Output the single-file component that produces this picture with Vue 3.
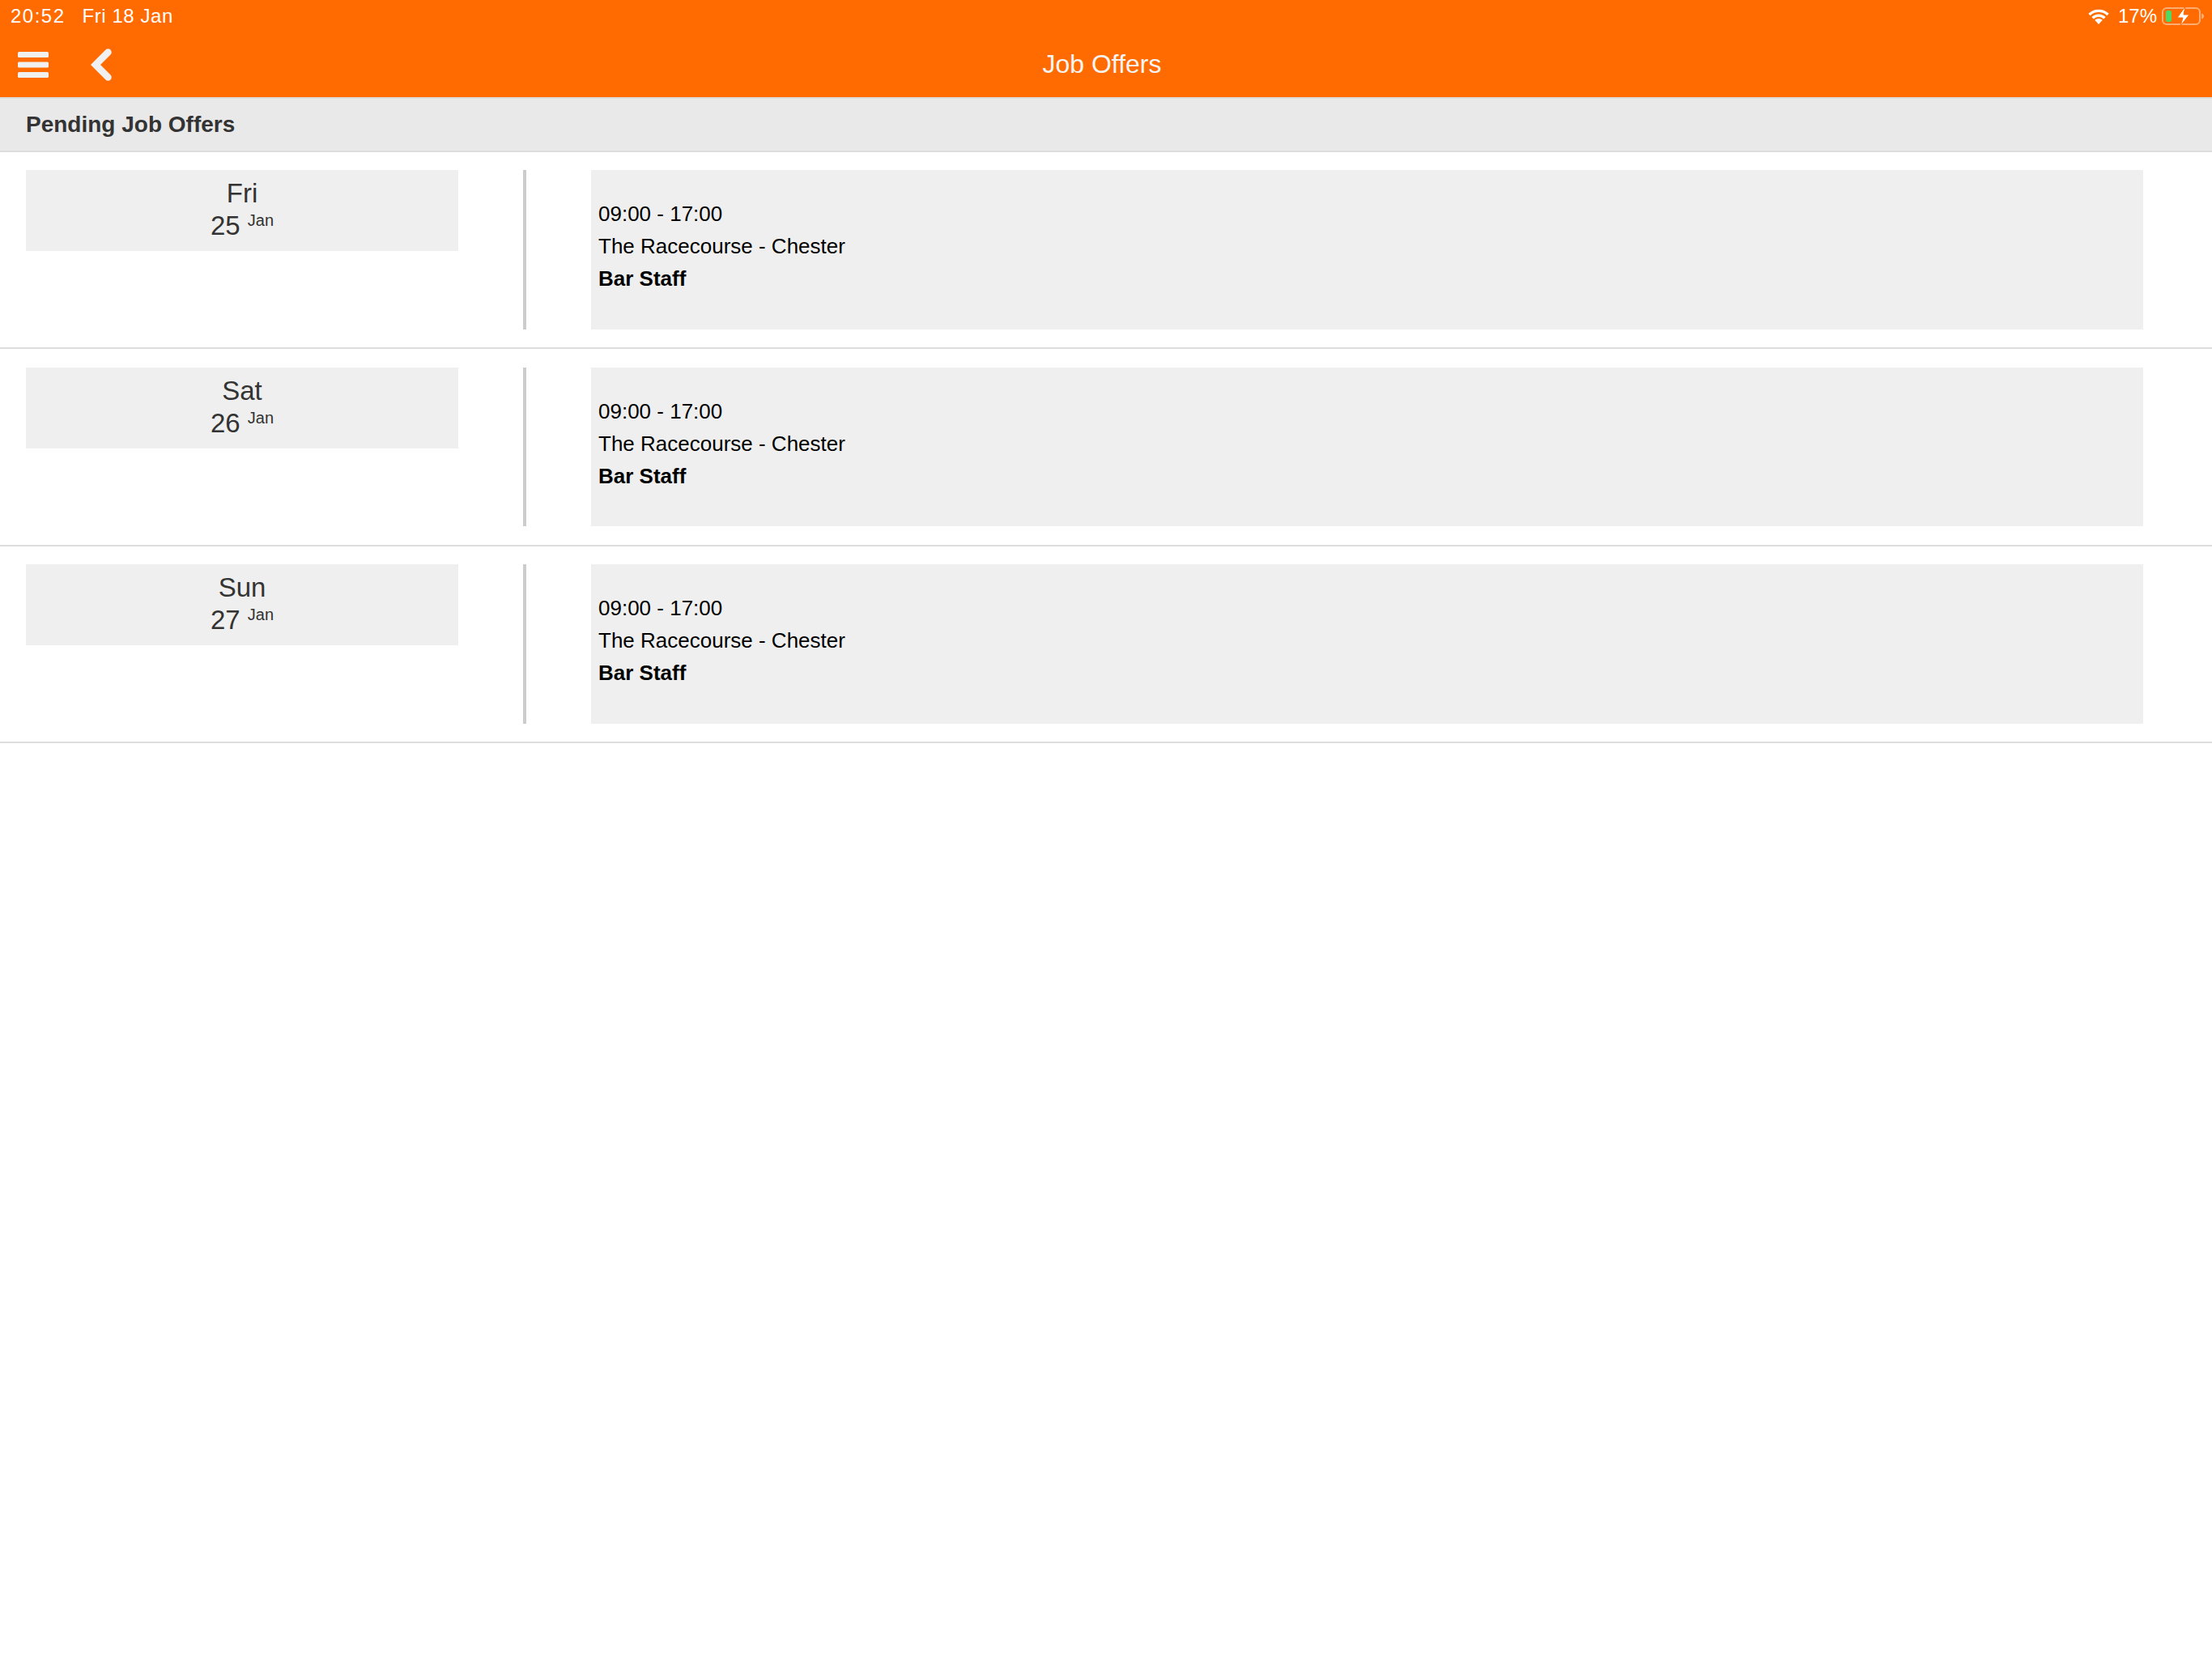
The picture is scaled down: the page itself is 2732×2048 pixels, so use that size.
<script setup>
const rows = [
  { day: 'Fri', date: 25 },
  { day: 'Sat', date: 26 },
  { day: 'Sun', date: 27 },
]
</script>

<template>
  <div class="page">
    <header class="top">
      <div class="status">
        <div class="status-left"><span class="time">20:52</span><span>Fri 18 Jan</span></div>
        <div class="status-right">
          <svg class="wifi" width="28" height="20" viewBox="0 0 28 20">
            <path d="M14 20 9.200 14.800a7 7 0 0 1 9.600 0Z" fill="#fff" />
            <path d="M2.500 8a16.500 16.500 0 0 1 23 0M6.600 12.200a10.500 10.500 0 0 1 14.800 0" fill="none" stroke="#fff" stroke-width="3.400" />
          </svg>
          <span class="pct">17%</span>
          <svg class="batt" width="52" height="24" viewBox="0 0 52 24">
            <rect x="1" y="2" width="46" height="20" rx="5" fill="none" stroke="#fff" stroke-opacity=".45" stroke-width="2" />
            <path d="M49 8.500c2 .5 3 2 3 3.500s-1 3-3 3.500Z" fill="#fff" fill-opacity=".45" />
            <rect x="5" y="5" width="7" height="14" rx="2" fill="#4cd964" />
            <path d="M29 0 19 14h7l-3 10 11-14h-7l2-10Z" fill="#fff" stroke="#ff6b00" stroke-width="1" />
          </svg>
        </div>
      </div>
      <div class="nav">
        <div class="nav-icons">
          <svg class="menu" width="38" height="32" viewBox="0 0 38 32">
            <rect y="0" width="38" height="7" rx="1.500" />
            <rect y="12.500" width="38" height="7" rx="1.500" />
            <rect y="25" width="38" height="7" rx="1.500" />
          </svg>
          <svg class="back" width="26" height="40" viewBox="0 0 26 40">
            <path d="M21.500 4.500 6 20l15.500 15.500" fill="none" stroke="#f0f0f0" stroke-width="8.500" stroke-linecap="round" stroke-linejoin="miter" />
          </svg>
        </div>
        <div class="title">Job Offers</div>
      </div>
    </header>

    <div class="section">Pending Job Offers</div>

    <div v-for="r in rows" :key="r.day" class="row">
      <div class="date-box">
        <div class="day">{{ r.day }}</div>
        <div class="date">{{ r.date }} <sup class="month">Jan</sup></div>
      </div>
      <div class="divider"></div>
      <div class="info">
        <div>09:00 - 17:00</div>
        <div>The Racecourse - Chester</div>
        <div class="role">Bar Staff</div>
      </div>
    </div>
  </div>
</template>

<style>
html, body { margin: 0; background: #fff; }
</style>

<style scoped>
.page {
  width: 2732px;
  height: 2048px;
  background: #fff;
  font-family: "Liberation Sans", Arial, sans-serif;
  overflow: hidden;
}
.top {
  height: 120px;
  background: #ff6b00;
  color: #fff;
  display: flex;
  flex-direction: column;
}
.status {
  height: 40px;
  display: flex;
  justify-content: space-between;
  align-items: center;
  padding: 0 10px 0 13px;
  font-size: 24px;
  letter-spacing: .55px;
}
.status-left { display: flex; gap: 21px; }
.time { letter-spacing: 1.500px; }
.status-right { display: flex; align-items: center; gap: 6px; }
.wifi { margin-right: 4px; }
.pct { letter-spacing: 0; }
.nav {
  flex: 1;
  position: relative;
  display: flex;
  align-items: center;
  justify-content: center;
}
.nav-icons {
  position: absolute;
  left: 22px;
  top: 20px;
  display: flex;
  align-items: center;
  gap: 52px;
}
.menu { fill: #f0f0f0; }
.title {
  font-size: 32px;
  color: #f4f4f4;
  margin: -2px 10px 0 0;
}
.section {
  box-sizing: border-box;
  height: 68px;
  background: #e9e9e9;
  border-top: 2px solid #ddd;
  border-bottom: 2px solid #ddd;
  padding-left: 32px;
  display: flex;
  align-items: center;
  font-size: 28px;
  font-weight: 700;
  color: #333;
}
.row {
  box-sizing: border-box;
  height: 243.330px;
  border-bottom: 2px solid #ddd;
  padding: 22.400px 0 0 32px;
  display: flex;
  align-items: flex-start;
}
.date-box {
  flex: none;
  width: 534px;
  height: 100px;
  background: #efefef;
  color: #333;
  text-align: center;
}
.day { font-size: 33px; line-height: 40px; padding-top: 9px; }
.date { font-size: 33px; line-height: 40px; }
.month { font-size: 20px; line-height: 0; vertical-align: 11px; }
.divider {
  flex: none;
  width: 4px;
  height: 196.700px;
  background: #ccc;
  margin-left: 80px;
}
.info {
  box-sizing: border-box;
  flex: none;
  width: 1917px;
  height: 196.700px;
  margin-left: 80px;
  background: #efefef;
  padding: 34px 0 0 9px;
  font-size: 26px;
  line-height: 40px;
  color: #000;
}
.role { font-weight: 700; }
</style>
